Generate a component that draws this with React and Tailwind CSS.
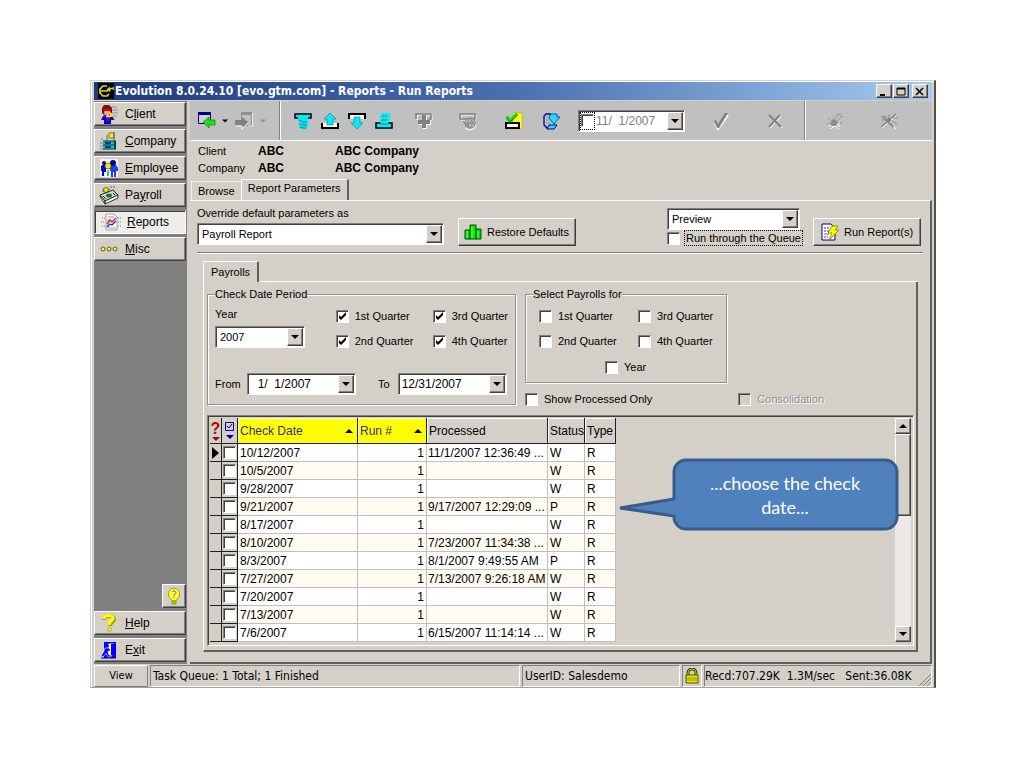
import React from "react";
import clsx from "clsx";

const raised =
  "border border-t-white border-l-white border-r-[#404040] border-b-[#404040] shadow-[inset_-1px_-1px_0_#808080]";
const sunken =
  "border border-t-[#808080] border-l-[#808080] border-r-white border-b-white shadow-[inset_1px_1px_0_#404040]";
const etched = "border border-[#909090] shadow-[1px_1px_0_#fff,inset_1px_1px_0_#fff]";
const panel = "border border-t-[#808080] border-r-white border-b-white border-l-[#808080]";

const payrolls = [
  { date: "10/12/2007", run: 1, processed: "11/1/2007 12:36:49 ...", status: "W", type: "R" },
  { date: "10/5/2007", run: 1, processed: "", status: "W", type: "R" },
  { date: "9/28/2007", run: 1, processed: "", status: "W", type: "R" },
  { date: "9/21/2007", run: 1, processed: "9/17/2007 12:29:09 ...", status: "P", type: "R" },
  { date: "8/17/2007", run: 1, processed: "", status: "W", type: "R" },
  { date: "8/10/2007", run: 1, processed: "7/23/2007 11:34:38 ...", status: "W", type: "R" },
  { date: "8/3/2007", run: 1, processed: "8/1/2007 9:49:55 AM", status: "P", type: "R" },
  { date: "7/27/2007", run: 1, processed: "7/13/2007 9:26:18 AM", status: "W", type: "R" },
  { date: "7/20/2007", run: 1, processed: "", status: "W", type: "R" },
  { date: "7/13/2007", run: 1, processed: "", status: "W", type: "R" },
  { date: "7/6/2007", run: 1, processed: "6/15/2007 11:14:14 ...", status: "W", type: "R" },
];

const Svg = ({ children, className = "h-5 w-5", box = "0 0 20 20" }) => (
  <svg viewBox={box} className={clsx("shrink-0", className)} fill="none" aria-hidden="true">
    {children}
  </svg>
);

/* Sidebar icons */
const ClientIcon = () => (
  <Svg>
    <path d="M11 3h7M13 6h6M13 9h6M12 12h6M12 15h4" stroke="#909090" />
    <path d="M3 4l2-3h5l3 3v5l-2 2H5L3 9z" fill="#801010" />
    <path d="M6 5h5v5l-2 3H7L5 9z" fill="#ffb080" />
    <path d="M5 6l5-2 2 2v1H5z" fill="#d00000" />
    <path d="M4 12l3-1 2 2 2-2 3 2 1 3h-3v4H5v-4H2z" fill="#0000e0" />
    <path d="M7 12h4l-2 5z" fill="#fff" />
    <path d="M8 13h2v4H8z" fill="#e00000" />
    <path d="M11 8l3 2v3h-3z" fill="#ffe000" />
  </Svg>
);

const CompanyIcon = () => (
  <Svg>
    <path d="M2 9l2-2M1 12h3M1 15h3M1 18h3" stroke="#808080" />
    <path d="M7 4h2v6H7z" fill="#a0a0a0" />
    <path d="M10 2h5v5h-5z" fill="#ffe820" stroke="#808000" />
    <path d="M15 1v9" stroke="#606060" />
    <path d="M4 10h13v8H4z" fill="#20c0c8" />
    <path d="M4 10h13M4 18h13M4 14h13" stroke="#003838" />
    <path d="M6 12h6M6 16h6" stroke="#004080" strokeWidth="2" />
    <path d="M15 10h2v8h-2z" fill="#004040" />
  </Svg>
);

const EmployeeIcon = () => (
  <Svg>
    <path d="M1 1h18v18H1z" fill="#f4f4f4" />
    <path d="M2 8l3-2h4v12H7v-4H5v4H3v-5H2z" fill="#0000d8" />
    <path d="M10 9l3-2h4l2 3v3h-2v6h-2v-5h-1v5h-2v-6h-2z" fill="#2040e8" />
    <circle cx="5" cy="5" r="2" fill="#101060" />
    <circle cx="14" cy="5" r="3" fill="#000080" />
    <circle cx="9" cy="8" r="3" fill="#ffe000" stroke="#505000" strokeWidth=".6" />
    <path d="M7 11h4v7H7z" fill="#fff" />
    <path d="M9 12v6" stroke="#00a0c0" strokeWidth="1.5" />
  </Svg>
);

const PayrollIcon = () => (
  <Svg>
    <path d="M4 4h7M3 6h5M11 2h6" stroke="#606060" strokeDasharray="2 1" />
    <circle cx="7" cy="5" r="2.5" fill="#ffe000" stroke="#404000" strokeWidth=".7" />
    <path d="M1 10l13-5 5 5-13 6z" fill="#c0e0c0" stroke="#202020" />
    <path d="M1 10l5 6v3l-4-6zM6 16l13-6v3L6 19z" fill="#fff" stroke="#303030" />
    <ellipse cx="10" cy="10.5" rx="3" ry="2" fill="#207040" />
    <path d="M4 11l3 3M14 8l2 2" stroke="#202020" />
  </Svg>
);

const ReportsIcon = () => (
  <Svg>
    <path d="M1 6h3M0 10h3M1 14h3M17 6h3M17 10h3M17 14h3" stroke="#808080" strokeDasharray="1 1" />
    <path d="M5 2h8l3 3v13H5z" fill="#fff" stroke="#a0a0a0" />
    <path d="M7 5h6" stroke="#909090" />
    <path d="M6 12l3-4 2 2 4-4" stroke="#e02020" strokeWidth="1.5" />
    <path d="M6 15l3-3 2 1 4-4" stroke="#2020d0" strokeWidth="1.3" />
    <path d="M7 7v9h8" stroke="#606060" strokeWidth=".6" />
  </Svg>
);

const MiscIcon = () => (
  <Svg>
    {[4, 10, 16].map((x) => (
      <circle key={x} cx={x} cy="10" r="2" fill="#fff060" stroke="#606000" />
    ))}
  </Svg>
);

const HelpIcon = () => (
  <Svg>
    <path d="M5 7c0-5 10-5 10-1 0 3-4 3-4 7" stroke="#a0a000" strokeWidth="4" />
    <path d="M5 6c0-5 9-4 9-1 0 3-4 3-4 7" stroke="#ffff00" strokeWidth="3" />
    <path d="M9 15h3v3H9z" fill="#ffff00" stroke="#909000" strokeWidth=".6" />
  </Svg>
);

const ExitIcon = () => (
  <Svg>
    <path d="M5 2h12v16H5z" fill="#0000ff" />
    <path d="M8 4l7-1v13l-7-1z" fill="#fff" />
    <path d="M12 4l4-1v14l-4-2z" fill="#0000ff" />
    <circle cx="8" cy="6" r="2" fill="#0000ff" />
    <path d="M6 8h4l2 3h-3l1 4h2v2H9l-2-4-3 4-2-1 3-5z" fill="#0000ff" stroke="#fff" strokeWidth=".6" />
    <path d="M2 18h15" stroke="#000080" />
  </Svg>
);

const BulbIcon = () => (
  <Svg>
    <path d="M10 2a6 6 0 0 0-3 11l1 2h4l1-2a6 6 0 0 0-3-11z" fill="#ffff40" stroke="#a0a000" />
    <path d="M8 6c1-2 4-1 4 1 0 1-2 1-2 3" stroke="#606060" />
    <path d="M9.5 11h1v1h-1z" fill="#606060" />
    <path d="M8 15h4v3H8z" fill="#c0c000" stroke="#808000" strokeWidth=".6" />
  </Svg>
);

/* Toolbar icons */
const BackIcon = () => (
  <Svg>
    <path d="M2.500 1.500h12v11h-12z" fill="#d0d0d0" stroke="#000080" />
    <path d="M2 1h13v3H2z" fill="#000080" />
    <path d="M7 11l6-5v3h6v5h-6v3z" fill="#20e020" stroke="#008000" strokeWidth=".7" />
  </Svg>
);

const ForwardIcon = () => (
  <Svg>
    <path d="M7.500 1.500h10v13h-10z" fill="#c0c0c0" stroke="#909090" />
    <path d="M7 1h11v3H7z" fill="#909090" />
    <path d="M14 11L8 6v3H1v5h7v3z" fill="#808080" />
    <path d="M2 15h6v3l6-6M18.500 2v13H14" stroke="#fff" strokeWidth=".8" />
  </Svg>
);

const FirstIcon = () => (
  <Svg>
    <path d="M2 3h16v4H2z" fill="#00e8f0" stroke="#000" strokeWidth="1.5" />
    <path d="M5 4h11l-1 4h1l-2 3h2l-2 3h2l-3 4H7l-2-3h2l-2-3h2L5 9z" fill="#10e8f0" />
    <path d="M6 9l4 2h4M6 13l4 1h4M7 16l3 1h3" stroke="#008898" />
  </Svg>
);

const PriorIcon = () => (
  <Svg>
    <path d="M2 12v5h16v-5" fill="#fff" stroke="#000" strokeWidth="2" />
    <path d="M10 2l6 6h-3v6H7V8H4z" fill="#10e8f0" stroke="#0090a0" strokeWidth=".7" />
  </Svg>
);

const NextIcon = () => (
  <Svg>
    <path d="M2 8V3h16v5" fill="#fff" stroke="#000" strokeWidth="2" />
    <path d="M10 18l6-6h-3V6H7v6H4z" fill="#10e8f0" stroke="#0090a0" strokeWidth=".7" />
  </Svg>
);

const LastIcon = () => (
  <Svg>
    <path d="M2 12h16v5H2z" fill="#00e8f0" stroke="#000" strokeWidth="1.5" />
    <path d="M8 2h9l-2 3h2l-2 3h2l-5 7H4l4-5H5l3-3H5z" fill="#10e8f0" />
    <path d="M8 5h5M7 9h6M6 13h7" stroke="#008898" />
  </Svg>
);

const InsertIcon = () => (
  <Svg>
    <path d="M3 9V4h15v5h-3" stroke="#fff" />
    <path d="M2 8V3h15v5h-3" stroke="#808080" strokeWidth="1.5" />
    <path d="M9 5h4v5h4v4h-4v4H9v-4H5v-4h4z" fill="#fff" />
    <path d="M8 4h4v5h4v4h-4v4H8v-4H4V9h4z" fill="#808080" />
  </Svg>
);

const DeleteIcon = () => (
  <Svg>
    <path d="M3 9V4h15v5H3" stroke="#fff" />
    <path d="M2 8V3h15v5H2z" stroke="#808080" strokeWidth="1.5" />
    <circle cx="12" cy="12" r="5" fill="#c0c0c0" stroke="#808080" />
    <path d="M8 12h8M12 7c-3 3-3 6 0 10M12 7c3 3 3 6 0 10M5 10l5 6M9 15l5-6" stroke="#808080" />
    <path d="M7 17l4 2 5-1 2-4" stroke="#fff" />
  </Svg>
);

const PostIcon = () => (
  <Svg>
    <path d="M9 2h9v16h-6l-3-3z" fill="#ffff20" stroke="#c0b000" strokeWidth=".7" />
    <path d="M2 12h13v5H2z" fill="#fff" stroke="#000" strokeWidth="2" />
    <path d="M3 6l3 4 7-7" stroke="#00a000" strokeWidth="3" />
    <path d="M3 5l3 4 7-7" stroke="#20f020" strokeWidth="1.5" />
  </Svg>
);

const RefreshIcon = () => (
  <Svg>
    <path d="M10 3H5L3 5v9l3 3h2" stroke="#000080" strokeWidth="1.3" />
    <path d="M8 14h8l-3 4H6z" fill="#20e0ff" stroke="#000080" />
    <path d="M9 4l2-1h5v3h3l-6 7-5-6z" fill="#20e0ff" stroke="#0030a0" strokeWidth=".8" />
    <path d="M5 6h2M5 9h3M5 12h5" stroke="#60a0e0" />
  </Svg>
);

const CommitIcon = () => (
  <Svg>
    <path d="M4 12l3 6L17 4" stroke="#fff" strokeWidth="2" />
    <path d="M3 10l2-1 2 4 7-11h3L8 17H6z" fill="#808080" />
  </Svg>
);

const CancelIcon = () => (
  <Svg>
    <path d="M5 5l12 12M16 5L5 17" stroke="#fff" strokeWidth="1.5" />
    <path d="M4 4l12 12M15 4L4 16" stroke="#808080" strokeWidth="2" />
  </Svg>
);

const BugIcon = () => (
  <Svg>
    <path d="M3 15h12M5 18l10-6M6 10l8 8" stroke="#fff" />
    <circle cx="9" cy="12" r="3" fill="#808080" />
    <path
      d="M9 12L3 7M9 12L2 13M9 12l-4 5M9 12l5 5M9 12h8M9 12l7-5M9 12l3-8M9 12L8 5"
      stroke="#909090"
      strokeDasharray="2 1"
    />
    <path d="M12 4l4-1M15 6l3-1" stroke="#909090" />
  </Svg>
);

const BugOffIcon = () => (
  <Svg>
    <path d="M3 17L17 5M4 6l13 12" stroke="#fff" />
    <path d="M3 5l11 11M2 16L17 3" stroke="#808080" strokeWidth="1.5" />
    <path d="M6 4l2 6M10 3v7M14 7h5M13 10l5 3M2 9h6M12 12l2 5" stroke="#909090" />
    <circle cx="10" cy="9" r="2" fill="#808080" />
  </Svg>
);

const BarsIcon = () => (
  <Svg>
    <path d="M2 8h5v9H2zM13 7h5v10h-5z" fill="#00d800" stroke="#005000" />
    <path d="M7 3h6v14H7z" fill="#00f000" stroke="#005000" />
    <path d="M4 9v7M9 5v11M15 9v7" stroke="#80ff80" />
  </Svg>
);

const RunIcon = () => (
  <Svg>
    <path d="M2 2h9l4 4v12H2z" fill="#fff" stroke="#000080" />
    <path d="M4 6h6M4 9h5M4 15h4" stroke="#3030c0" strokeDasharray="2 1" />
    <path d="M4 12h5" stroke="#d04040" />
    <path d="M12 4h6l-3 4h4L9 18l3-7H8z" fill="#ffff00" stroke="#808000" strokeWidth=".8" />
  </Svg>
);

const LockIcon = () => (
  <Svg className="h-4 w-4" box="0 0 16 16">
    <path d="M4 8V5a4 4 0 0 1 8 0v3" stroke="#404000" strokeWidth="3" />
    <path d="M4 8V5a4 4 0 0 1 8 0v3" stroke="#c8c800" />
    <path d="M2 7h12v8H2z" fill="#e8e800" stroke="#505000" />
    <path d="M3 10h10M3 12h10" stroke="#909000" />
  </Svg>
);

const LogoIcon = () => (
  <Svg className="h-4 w-4" box="0 0 16 16">
    <path d="M0 0h16v16H0z" fill="#000" />
    <path d="M9 3H5L2 6v4l3 3h4l2-2M3 8h6l2-3" stroke="#e8e000" strokeWidth="1.7" />
    <path d="M9 7l2-3 2 1 3-1v3l-3-1-1 3z" fill="#d0c820" />
  </Svg>
);

const Arrow = ({ up, className = "fill-black" }) => (
  <svg viewBox="0 0 8 4" className={clsx("h-1 w-2 shrink-0", className)} aria-hidden="true">
    <path d={up ? "M0 4h8L4 0z" : "M0 0h8L4 4z"} />
  </svg>
);

const Combo = ({ id, label, value, className }) => (
  <div className={clsx("relative flex h-[22px] bg-white p-0.5", sunken, className)}>
    <select
      id={id}
      aria-label={label}
      defaultValue={value}
      className="w-full appearance-none bg-transparent pr-5 pl-0.5 outline-none"
    >
      <option>{value}</option>
    </select>
    <span
      className={clsx(
        "pointer-events-none absolute inset-y-px right-px flex w-4 items-center justify-center bg-[#d4d0c8]",
        raised
      )}
    >
      <Arrow />
    </span>
  </div>
);

const DateBox = ({ id, label, value, muted, children, className }) => (
  <div className={clsx("flex h-[22px] items-stretch bg-white p-px text-[12px]", sunken, className)}>
    {children}
    <input
      id={id}
      type="text"
      aria-label={label}
      defaultValue={value}
      className={clsx("w-0 flex-1 bg-transparent whitespace-pre outline-none", muted ? "text-[#808080]" : "pl-0.5")}
    />
    <button
      type="button"
      aria-label="Open calendar"
      className={clsx("flex w-4 items-center justify-center bg-[#d4d0c8]", raised)}
    >
      <Arrow />
    </button>
  </div>
);

const Box = ({ checked, disabled, label }) => (
  <span className="grid h-[13px] w-[13px] shrink-0 *:col-start-1 *:row-start-1">
    <input
      type="checkbox"
      aria-label={label}
      defaultChecked={checked}
      disabled={disabled}
      className={clsx("peer h-[13px] w-[13px] appearance-none", disabled ? "bg-[#d4d0c8]" : "bg-white", sunken)}
    />
    <svg viewBox="0 0 13 13" className="pointer-events-none invisible h-[13px] w-[13px] peer-checked:visible">
      <path d="M3 5l2 2 5-5v3l-5 5-2-2z" fill="#000" />
    </svg>
  </span>
);

const Check = ({ label, checked, disabled, className }) => (
  <label className={clsx("flex h-4 items-center gap-1.5 whitespace-nowrap", className)}>
    <Box checked={checked} disabled={disabled} />
    <span className={clsx(disabled && "text-[#909090] [text-shadow:1px_1px_0_#fff]")}>{label}</span>
  </label>
);

const NavButton = ({ icon, before = "", hot, after, active }) => (
  <button
    type="button"
    className={clsx(
      "flex h-6 items-center gap-1.5 text-left text-[12px]",
      active ? "bg-[#efedea] pl-1.5 " + sunken : "bg-[#d4d0c8] pl-1 " + raised
    )}
  >
    {icon}
    <span>
      {before}
      <u>{hot}</u>
      {after}
    </span>
  </button>
);

const Tool = ({ label, children }) => (
  <button type="button" aria-label={label} className="h-5 w-5 shrink-0">
    {children}
  </button>
);

const Caption = ({ label, children }) => (
  <button
    type="button"
    aria-label={label}
    className={clsx("flex h-[14px] w-4 items-center justify-center bg-[#d4d0c8]", raised)}
  >
    <svg viewBox="0 0 10 9" className="h-[9px] w-[10px]" fill="none" stroke="#000">
      {children}
    </svg>
  </button>
);

const TitleBar = () => (
  <header className="flex h-[18px] items-center gap-px bg-linear-to-r from-[#1c3a7e] via-[#4a70b0] to-[#a6caf0] px-1 text-white">
    <LogoIcon />
    <h1 className="flex-1 font-['DejaVu_Sans_Condensed','DejaVu_Sans',sans-serif] text-[12px] font-bold">
      Evolution 8.0.24.10 [evo.gtm.com] - Reports - Run Reports
    </h1>
    <Caption label="Minimize">
      <path d="M1 8h5" strokeWidth="2" />
    </Caption>
    <Caption label="Maximize">
      <path d="M1 1.5h8" strokeWidth="2" />
      <path d="M1 1v7h8V1" />
    </Caption>
    <span className="w-px" />
    <Caption label="Close">
      <path d="M1 1l7 7M8 1L1 8" strokeWidth="1.5" />
    </Caption>
  </header>
);

const Sidebar = () => (
  <nav className="flex w-[93px] shrink-0 flex-col gap-[3px] bg-[#808080] pt-px pr-px pb-0.5">
    <NavButton icon={<ClientIcon />} before="C" hot="l" after="ient" />
    <NavButton icon={<CompanyIcon />} hot="C" after="ompany" />
    <NavButton icon={<EmployeeIcon />} hot="E" after="mployee" />
    <NavButton icon={<PayrollIcon />} before="Pa" hot="y" after="roll" />
    <NavButton icon={<ReportsIcon />} hot="R" after="eports" active />
    <NavButton icon={<MiscIcon />} hot="M" after="isc" />
    <button
      type="button"
      aria-label="Tips"
      className={clsx("mt-auto flex h-6 w-6 items-center justify-center self-end bg-[#d4d0c8]", raised)}
    >
      <BulbIcon />
    </button>
    <NavButton icon={<HelpIcon />} hot="H" after="elp" />
    <NavButton icon={<ExitIcon />} before="E" hot="x" after="it" />
  </nav>
);

const Toolbar = () => (
  <div className="flex h-10 items-stretch border-b border-white bg-[#c0c0c0]">
    <div className="flex w-[90px] items-center gap-1.5 border-r border-[#808080] pl-1.5">
      <Tool label="Back">
        <BackIcon />
      </Tool>
      <Arrow className="w-[6px] fill-black" />
      <Tool label="Forward">
        <ForwardIcon />
      </Tool>
      <Arrow className="w-[6px] fill-[#909090]" />
    </div>
    <div className="flex flex-1 items-center border-l border-white pl-3">
      <div className="flex gap-[7px]">
        <Tool label="First">
          <FirstIcon />
        </Tool>
        <Tool label="Prior">
          <PriorIcon />
        </Tool>
        <Tool label="Next">
          <NextIcon />
        </Tool>
        <Tool label="Last">
          <LastIcon />
        </Tool>
      </div>
      <div className="ml-5 flex gap-6">
        <Tool label="Insert">
          <InsertIcon />
        </Tool>
        <Tool label="Delete">
          <DeleteIcon />
        </Tool>
      </div>
      <div className="ml-[26px] flex items-center gap-[17px]">
        <Tool label="Post">
          <PostIcon />
        </Tool>
        <Tool label="Refresh">
          <RefreshIcon />
        </Tool>
        <DateBox label="Effective date" value="11/  1/2007" muted className="w-[107px]">
          <span className="mr-px flex items-center border border-dotted border-black">
            <Box label="Use effective date" />
          </span>
        </DateBox>
      </div>
      <div className="ml-[26px] flex gap-[34px]">
        <Tool label="Commit">
          <CommitIcon />
        </Tool>
        <Tool label="Cancel">
          <CancelIcon />
        </Tool>
      </div>
    </div>
    <div className="flex w-[128px] items-center gap-[34px] border-l border-[#808080] pl-5 shadow-[inset_1px_0_0_#fff]">
      <Tool label="Debug on">
        <BugIcon />
      </Tool>
      <Tool label="Debug off">
        <BugOffIcon />
      </Tool>
    </div>
  </div>
);

const headCell = "border-r border-b border-[#202020] pl-0.5 text-left font-normal shadow-[inset_1px_1px_0_#fff]";

const PayrollGrid = () => (
  <table className="w-[406px] table-fixed border-separate border-spacing-0 self-start bg-white text-[12px]">
    <colgroup>
      <col className="w-3" />
      <col className="w-4" />
      <col className="w-[120px]" />
      <col className="w-[69px]" />
      <col className="w-[121px]" />
      <col className="w-[37px]" />
      <col className="w-[31px]" />
    </colgroup>
    <thead>
      <tr className="h-[26px] bg-[#d4d0c8]">
        <th className="border-r border-b border-[#202020]" aria-label="Locate">
          <div className="flex flex-col items-center">
            <span className="text-base leading-4 font-bold text-[#c00000]">?</span>
            <Arrow className="fill-[#a00020]" />
          </div>
        </th>
        <th className="border-r border-b border-[#202020]" aria-label="Select">
          <div className="flex flex-col items-center gap-1">
            <svg viewBox="0 0 9 9" className="h-[9px] w-[9px]" fill="none" stroke="#0000a0">
              <path d="M.5.5h8v8h-8zM2 4l2 2 3-4" />
            </svg>
            <Arrow className="fill-[#0000a0]" />
          </div>
        </th>
        <th className={clsx(headCell, "bg-[#ffff00]")}>
          <div className="flex items-center justify-between pr-1 text-[#303080]">
            Check Date <Arrow up className="fill-black" />
          </div>
        </th>
        <th className={clsx(headCell, "bg-[#ffff00]")}>
          <div className="flex items-center justify-between pr-1 text-[#303080]">
            Run # <Arrow up className="fill-black" />
          </div>
        </th>
        <th className={headCell}>Processed</th>
        <th className={headCell}>Status</th>
        <th className={headCell}>Type</th>
      </tr>
    </thead>
    <tbody>
      {payrolls.map((p, i) => (
        <tr
          key={p.date}
          className={clsx(
            "h-[18px] *:border-r *:border-b *:border-[#c0c0c0] *:leading-4 *:whitespace-nowrap",
            i % 2 ? "bg-[#fffbf0]" : "bg-white"
          )}
        >
          <td className="border-[#202020]! bg-[#d4d0c8]">
            {i === 0 && (
              <svg viewBox="0 0 7 12" className="ml-0.5 h-3 w-[7px]">
                <path d="M0 0v12l7-6z" />
              </svg>
            )}
          </td>
          <td className="border-[#202020]! bg-[#d4d0c8]">
            <div className="flex justify-center">
              <Box label={"Select " + p.date} />
            </div>
          </td>
          <td className="pl-0.5">{p.date}</td>
          <td className="pr-0.5 text-right">{p.run}</td>
          <td className="pl-px">{p.processed}</td>
          <td className="pl-0.5">{p.status}</td>
          <td className="pl-0.5">{p.type}</td>
        </tr>
      ))}
    </tbody>
  </table>
);

const ScrollBar = () => (
  <div className="ml-auto flex w-4 flex-col bg-[#ebe9e5]">
    <button
      type="button"
      aria-label="Scroll up"
      className={clsx("flex h-4 items-center justify-center bg-[#d4d0c8]", raised)}
    >
      <Arrow up />
    </button>
    <div className={clsx("h-[82px] bg-[#d4d0c8]", raised)} />
    <button
      type="button"
      aria-label="Scroll down"
      className={clsx("mt-auto flex h-4 items-center justify-center bg-[#d4d0c8]", raised)}
    >
      <Arrow />
    </button>
  </div>
);

const Callout = () => (
  <div className="absolute top-[42px] left-[410px] h-[74px] w-[282px]">
    <svg viewBox="0 0 282 74" className="absolute inset-0 h-full w-full">
      <path
        d="M68 2H267a12 12 0 0 1 12 12V59a12 12 0 0 1-12 12H68a12 12 0 0 1-12-12V58L2 50 56 41V14A12 12 0 0 1 68 2z"
        fill="#4f81bd"
        stroke="#385d8a"
        strokeWidth="3"
      />
    </svg>
    <p className="relative pt-[13px] pr-8 pl-[84px] text-center font-['Lato',sans-serif] text-[18px] leading-6 text-white">
      ...choose the check date...
    </p>
  </div>
);

const RunReports = () => (
  <section className="flex-1 border-t border-r-2 border-b-2 border-t-white border-r-[#606060] border-b-[#606060] pb-2.5">
    <div className="mx-[7px] flex items-start border-b border-[#808080] pb-1.5 shadow-[0_1px_0_#fff]">
      <div className="pt-1">
        <label htmlFor="report" className="block h-4 leading-4">
          Override default parameters as
        </label>
        <Combo id="report" value="Payroll Report" className="mt-0.5 w-[247px]" />
      </div>
      <button
        type="button"
        className={clsx("mt-[17px] ml-[14px] flex h-7 w-[118px] items-center gap-1 pl-1 whitespace-nowrap", raised)}
      >
        <BarsIcon /> Restore Defaults
      </button>
      <div className="mt-[7px] ml-auto">
        <Combo label="Output" value="Preview" className="w-[133px]" />
        <label className="flex h-4 items-center gap-1 whitespace-nowrap">
          <Box />
          <span className="border border-dotted border-black px-px leading-[14px]">Run through the Queue</span>
        </label>
      </div>
      <button
        type="button"
        className={clsx("mt-[17px] mr-0.5 ml-2.5 flex h-7 w-[108px] items-center gap-1 pl-1.5 whitespace-nowrap", raised)}
      >
        <RunIcon /> Run Report(s)
      </button>
    </div>

    {/* Payrolls */}
    <div className="mt-2 mr-3 ml-[13px]">
      <div className="flex">
        <button
          type="button"
          className="h-[21px] rounded-t-xs border-t border-r-2 border-l border-t-white border-r-[#606060] border-l-white px-[7px]"
        >
          Payrolls
        </button>
        <div className="flex-1 border-b border-white" />
      </div>
      <div className="border-r-2 border-b-2 border-l border-r-[#606060] border-b-[#606060] border-l-white pt-1 pr-0.5 pb-1 pl-[3px]">
        <div className="flex items-start gap-[9px]">
          <fieldset className={clsx("h-[119px] w-[309px] px-[7px]", etched)}>
            <legend className="h-4 bg-[#d4d0c8] leading-4">Check Date Period</legend>
            <div className="flex justify-between">
              <div>
                <label htmlFor="year" className="mt-1 block leading-4">
                  Year
                </label>
                <Combo id="year" value="2007" className="mt-1 w-[90px]" />
              </div>
              <div className="mt-1.5 grid grid-cols-[97px_auto] gap-y-[9px]">
                <Check label="1st Quarter" checked />
                <Check label="3rd Quarter" checked />
                <Check label="2nd Quarter" checked />
                <Check label="4th Quarter" checked />
              </div>
            </div>
            <div className="mt-6 flex items-center">
              <label htmlFor="from" className="w-8">
                From
              </label>
              <DateBox id="from" value="  1/  1/2007" className="w-[109px]" />
              <label htmlFor="to" className="mr-2 ml-[22px]">
                To
              </label>
              <DateBox id="to" value="12/31/2007" className="w-[109px]" />
            </div>
          </fieldset>

          <div>
            <fieldset className={clsx("h-[97px] w-[202px] px-[7px]", etched)}>
              <legend className="h-4 bg-[#d4d0c8] leading-4">Select Payrolls for</legend>
              <div className="mt-1.5 ml-1.5 grid grid-cols-[99px_auto] gap-y-[9px]">
                <Check label="1st Quarter" />
                <Check label="3rd Quarter" />
                <Check label="2nd Quarter" />
                <Check label="4th Quarter" />
              </div>
              <Check label="Year" className="mt-2.5 ml-[72px] w-fit" />
            </fieldset>
            <div className="mt-2 flex w-[299px] justify-between">
              <Check label="Show Processed Only" />
              <Check label="Consolidation" disabled />
            </div>
          </div>
        </div>

        <div className={clsx("relative mt-2 flex p-0.5 pb-[3px]", sunken)}>
          <PayrollGrid />
          <ScrollBar />
          <Callout />
        </div>
      </div>
    </div>
  </section>
);

const StatusBar = () => (
  <footer className="flex h-[23px] items-stretch gap-0.5 pt-px font-['DejaVu_Sans_Condensed','DejaVu_Sans',sans-serif] text-[12px] whitespace-pre">
    <button
      type="button"
      className="w-[54px] border border-t-white border-r-[#808080] border-b-[#808080] border-l-white text-[11px]"
    >
      View
    </button>
    <div className={clsx("flex flex-1 items-center pl-0.5", panel)}>Task Queue: 1 Total; 1 Finished</div>
    <div className={clsx("flex w-[158px] items-center pl-0.5", panel)}>UserID: Salesdemo</div>
    <div className={clsx("flex w-5 items-center justify-center", panel)}>
      <LockIcon />
    </div>
    <div className={clsx("flex w-[228px] items-center justify-between", panel)}>
      <span>Recd:707.29K  1.3M/sec   Sent:36.08K</span>
      <svg viewBox="0 0 12 12" className="h-3 w-3 self-end" stroke="#808080">
        <path d="M0 12L12 0M4 12l8-8M8 12l4-4" />
      </svg>
    </div>
  </footer>
);

const App = () => {
  return (
    <div className="min-h-screen bg-white pt-20 pr-[88px] pl-[90px]">
      <div className="border-t border-r-2 border-b border-l border-t-[#d4d0c8] border-r-[#505050] border-b-[#a0a0a0] border-l-[#d4d0c8] bg-[#d4d0c8] pt-px pl-[3px] font-['Liberation_Sans',Arial,sans-serif] text-[11px] leading-4 text-black shadow-[inset_1px_1px_0_#fff]">
        <div className="pr-0.5">
          <TitleBar />
          <div className="mt-px flex">
            <Sidebar />
            <main className="ml-[3px] flex flex-1 flex-col">
              <Toolbar />
              <dl className="grid grid-cols-[60px_77px_auto] pt-0.5 pl-2 leading-[17px] [&>dd]:text-[12px] [&>dd]:font-bold">
                <dt>Client</dt>
                <dd>ABC</dd>
                <dd>ABC Company</dd>
                <dt>Company</dt>
                <dd>ABC</dd>
                <dd>ABC Company</dd>
              </dl>
              <div className="mt-0.5 flex items-end pl-px">
                <button type="button" className="h-[19px] border-t border-l border-[#f0eeea] px-1.5">
                  Browse
                </button>
                <button
                  type="button"
                  className="h-[21px] border-t border-r-2 border-l border-t-white border-r-[#606060] border-l-white px-1.5 pb-1"
                >
                  Report Parameters
                </button>
              </div>
              <RunReports />
            </main>
          </div>
          <StatusBar />
        </div>
      </div>
    </div>
  );
};

export default App;
